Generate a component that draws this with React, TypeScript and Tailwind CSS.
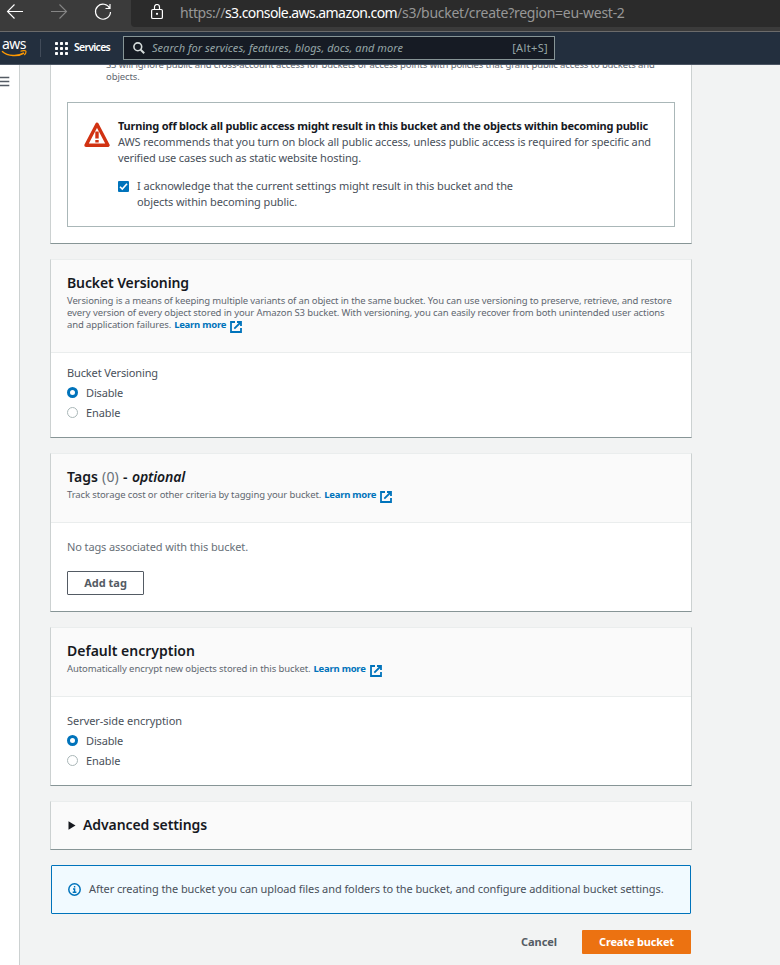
import type { ReactNode } from "react";

function ExternalIcon() {
  return (
    <svg width="12" height="12" viewBox="0 0 12 12" fill="none" stroke="#0073bb" strokeWidth="1.8" className="ml-[4px] mt-[2px] shrink-0">
      <path d="M5 1H1v10h10V7" />
      <path d="M7 1h4v4M11 1L4.300 7.700" />
    </svg>
  );
}

function LearnMore() {
  return (
    <a className="flex h-3 text-[9.5px] font-bold tracking-[-0.25px] text-[#0073bb]">
      Learn more
      <ExternalIcon />
    </a>
  );
}

function Card({ children, className = "" }: { children: ReactNode; className?: string }) {
  return (
    <section className={`border border-x-[#ccd1d1] border-t-[#eaeded] border-b-[#879596] bg-white ${className}`}>
      {children}
    </section>
  );
}

function CardHeader({ title, children }: { title: ReactNode; children: ReactNode }) {
  return (
    <header className="border-b border-[#eaeded] bg-[#fafafa] px-4 pt-3 pb-[21px]">
      <h2 className="flex h-[22px] text-[14px] leading-[22px] font-semibold text-[#16191f]">{title}</h2>
      <div className="pt-px text-[9.5px] leading-[12px] text-[#5f6770]">{children}</div>
    </header>
  );
}

function Radios({ label }: { label: ReactNode }) {
  return (
    <div className="text-[11px] leading-5 text-[#49505a]">
      {label}
      <div className="flex h-5 items-center gap-[8px]">
        <span className="mt-[-1px] h-[11px] w-[11px] rounded-full border-[3.5px] border-[#0073bb] bg-white" />
        <span className="tracking-[-0.14px]">Disable</span>
      </div>
      <div className="flex h-5 items-center gap-[8px]">
        <span className="mt-[-1px] h-[11px] w-[11px] rounded-full border border-[#aab7b8] bg-white" />
        <span className="tracking-[-0.07px]">Enable</span>
      </div>
    </div>
  );
}

function BrowserBar() {
  return (
    <div className="flex h-8 border-b border-[#6b6b6b] bg-[#3b3b3b]">
      <div className="flex h-6 w-[131px] shrink-0 items-center">
        <svg width="131" height="24" viewBox="0 0 131 24" fill="none" strokeWidth="1.1">
          <path d="M23 11.5H7.5M14.5 4.5l-7 7 7 7" stroke="#fff" />
          <path d="M51 11.5h15.5M59.500 4.500l7 7-7 7" stroke="#858585" />
          <path d="M109.800 8.500A7.500 7.500 0 1 0 110.500 12M110 4v4.500h-4.500" stroke="#fff" strokeWidth="1.2" />
        </svg>
      </div>
      <div className="flex h-[27px] flex-1 rounded-bl bg-[#2b2b2b] text-[14px] leading-[25px] whitespace-nowrap text-[#979797]">
        <svg width="12" height="16" viewBox="0 0 12 16" fill="none" stroke="#fff" strokeWidth="1.2" className="mt-[4px] mr-[17px] ml-[20px] shrink-0">
          <rect x="0.600" y="5.500" width="10.800" height="9" rx="1.300" />
          <path d="M3.500 5.500V3a2.500 2.500 0 0 1 5 0v2.500" />
          <circle cx="6" cy="9.800" r="0.500" fill="#fff" />
        </svg>
        <span className="tracking-[-0.41px]">https://</span>
        <span className="tracking-[-0.58px] text-white">s3.console.aws.amazon.com</span>
        <span className="tracking-[-0.27px]">/s3/bucket/create?region=eu-west-2</span>
      </div>
    </div>
  );
}

function AwsNav() {
  return (
    <nav className="flex h-[33px] items-center border-b border-[#4b5563] bg-[#232f3e] text-white">
      <div className="flex w-[41px] shrink-0 flex-col border-r border-[#414b59]">
        <span className="h-[11px] pl-[2px] text-[14px] leading-[9px] tracking-[-0.5px]">aws</span>
        <svg width="28" height="7" viewBox="0 0 28 7" fill="none" stroke="#ff9900" strokeWidth="1.5">
          <path d="M2 1.200C8 6.500 18 6.800 24 3" />
          <path d="M20.500 1.300c2-.8 5-.9 5.300-.3.300.8-.3 2.800-1.500 4" strokeWidth="1.200" />
        </svg>
      </div>
      <svg width="13" height="13" viewBox="0 0 13 13" fill="#fff" className="ml-[14px] shrink-0">
        {[0, 5, 10].map((y) => [0, 5, 10].map((x) => <rect key={`${x}-${y}`} x={x} y={y} width="3" height="3" rx="0.700" />))}
      </svg>
      <span className="ml-[6px] w-[49px] text-[10.5px] font-semibold tracking-[-0.72px]">Services</span>
      <div className="flex h-6 w-[432px] items-center border border-[#879596] bg-[#161b24] pr-[6px] pl-[9px] whitespace-nowrap text-[#95a5a6]">
        <svg width="12" height="12" viewBox="0 0 12 12" fill="none" stroke="#d5dbdb" strokeWidth="1.600">
          <circle cx="4.800" cy="4.800" r="3.900" />
          <path d="M7.700 7.700l3.500 3.500" strokeWidth="2" />
        </svg>
        <span className="ml-[7px] text-[11px] tracking-[0.04px] italic">Search for services, features, blogs, docs, and more</span>
        <span className="ml-auto text-[11px] tracking-[0.35px]">[Alt+S]</span>
      </div>
    </nav>
  );
}

function PublicAccessCard() {
  return (
    <Card className="-mt-[8px] pb-4">
      <div className="h-6 pt-px pl-[55px] text-[9.5px] leading-[12px] text-[#5f6770]">
        <p className="tracking-[-0.12px]">S3 will ignore public and cross-account access for buckets or access points with policies that grant public access to buckets and</p>
        <p className="tracking-[-0.1px]">objects.</p>
      </div>
      <div className="mx-4 mt-5 flex h-[125px] border border-[#aab7b8] pt-[15px] pl-4 text-[11px] leading-4 text-[#49505a]">
        <svg width="26" height="25" viewBox="0 0 26 25" fill="none" stroke="#d13212" className="mt-[4px] mr-[8px] shrink-0">
          <path d="M13 2.300L24 23.200H2z" strokeWidth="3.400" strokeLinejoin="round" />
          <path d="M13 9.500v7M13 18v2.600" strokeWidth="3.400" />
        </svg>
        <div>
          <p className="font-bold tracking-[-0.201px] text-[#16191f]">Turning off block all public access might result in this bucket and the objects within becoming public</p>
          <p className="tracking-[-0.116px]">AWS recommends that you turn on block all public access, unless public access is required for specific and</p>
          <p className="tracking-[-0.146px]">verified use cases such as static website hosting.</p>
          <div className="mt-3 flex">
            <span className="mt-[3px] mr-[8px] flex h-[11px] w-[11px] items-center justify-center rounded-[1px] bg-[#0073bb]">
              <svg width="9" height="9" viewBox="0 0 9 9" fill="none" stroke="#fff" strokeWidth="1.600">
                <path d="M1 4.800l2.300 2.300L8 1.800" />
              </svg>
            </span>
            <div>
              <p className="tracking-[-0.095px]">I acknowledge that the current settings might result in this bucket and the</p>
              <p className="tracking-[-0.106px]">objects within becoming public.</p>
            </div>
          </div>
        </div>
      </div>
    </Card>
  );
}

export default function App() {
  return (
    <div className="flex h-[965px] w-[780px] flex-col overflow-hidden bg-[#f2f3f3] font-['Noto_Sans','Open_Sans',sans-serif]">
      <BrowserBar />
      <AwsNav />
      <div className="flex min-h-0 flex-1 overflow-hidden">
        <aside className="w-5 shrink-0 border-r border-[#ccd1d1] bg-white">
          <svg width="10" height="12" viewBox="0 0 10 12" stroke="#545b64" strokeWidth="1.3" className="mt-[11px]">
            <path d="M0 1.500h9.300M0 5.500h9.300M0 9.500h9.300" />
          </svg>
        </aside>
        <main className="ml-[30px] flex w-[642px] shrink-0 flex-col gap-[15px] whitespace-nowrap">
          <PublicAccessCard />

          <Card>
            <CardHeader title={<span className="tracking-[-0.108px]">Bucket Versioning</span>}>
              <p className="tracking-[-0.128px]">Versioning is a means of keeping multiple variants of an object in the same bucket. You can use versioning to preserve, retrieve, and restore</p>
              <p className="tracking-[-0.112px]">every version of every object stored in your Amazon S3 bucket. With versioning, you can easily recover from both unintended user actions</p>
              <div className="flex h-3 gap-[3px]">
                <span className="tracking-[-0.109px]">and application failures.</span>
                <LearnMore />
              </div>
            </CardHeader>
            <div className="px-4 pt-[10px] pb-[14px]">
              <Radios label={<p className="tracking-[-0.131px]">Bucket Versioning</p>} />
            </div>
          </Card>

          <Card>
            <CardHeader
              title={
                <>
                  <span className="w-[35px] tracking-[0.07px]">Tags</span>
                  <span className="w-[21px] font-normal tracking-[0.19px] text-[#687078]">(0)</span>
                  <span className="w-[9px]">-</span>
                  <span className="tracking-[-0.145px] italic">optional</span>
                </>
              }
            >
              <div className="flex h-3 gap-[3px]">
                <span className="tracking-[-0.122px]">Track storage cost or other criteria by tagging your bucket.</span>
                <LearnMore />
              </div>
            </CardHeader>
            <div className="px-4 pt-[14px] pb-4">
              <p className="text-[11px] leading-5 tracking-[-0.113px] text-[#687078]">No tags associated with this bucket.</p>
              <button className="mt-[14px] block h-6 w-[77px] rounded-[1px] border border-[#545b64] text-[11px] font-bold text-[#545b64]">Add tag</button>
            </div>
          </Card>

          <Card>
            <CardHeader title="Default encryption">
              <div className="flex h-3 gap-[3px]">
                <span className="tracking-[-0.086px]">Automatically encrypt new objects stored in this bucket.</span>
                <LearnMore />
              </div>
            </CardHeader>
            <div className="px-4 py-[14px]">
              <Radios label={<p className="tracking-[-0.048px]">Server-side encryption</p>} />
            </div>
          </Card>

          <section className="flex h-[49px] shrink-0 items-center border border-x-[#ccd1d1] border-t-[#eaeded] border-b-[#879596] bg-[#fafafa] pl-[17px]">
            <svg width="8" height="9" viewBox="0 0 8 9" fill="#16191f" className="mt-[-1px] mr-[7px]">
              <path d="M0.500 0.300L7.500 4.500L0.500 8.700z" />
            </svg>
            <h2 className="mt-[-1px] text-[14px] leading-[22px] font-semibold tracking-[-0.094px] text-[#16191f]">Advanced settings</h2>
          </section>

          <div className="mr-px ml-px flex h-[49px] shrink-0 items-center rounded-[1px] border border-[#0073bb] bg-[#f1faff] pl-4 text-[11px] text-[#49505a]">
            <svg width="13" height="13" viewBox="0 0 13 13" fill="none" stroke="#0073bb" className="mr-[8px]">
              <circle cx="6.500" cy="6.500" r="5.700" strokeWidth="1.500" />
              <path d="M6.600 3v1.500M5 6h1.600v3.500M4.700 9.300h3.700" strokeWidth="1.400" />
            </svg>
            <p className="tracking-[-0.08px]">After creating the bucket you can upload files and folders to the bucket, and configure additional bucket settings.</p>
          </div>

          <div className="mt-px mr-px flex h-6 items-center justify-end text-[11px] font-bold">
            <button className="mr-[25px] tracking-[-0.055px] text-[#545b64]">Cancel</button>
            <button className="h-6 w-[109px] rounded-[1px] bg-[#ec7211] tracking-[-0.159px] text-white">Create bucket</button>
          </div>
        </main>
      </div>
    </div>
  );
}
